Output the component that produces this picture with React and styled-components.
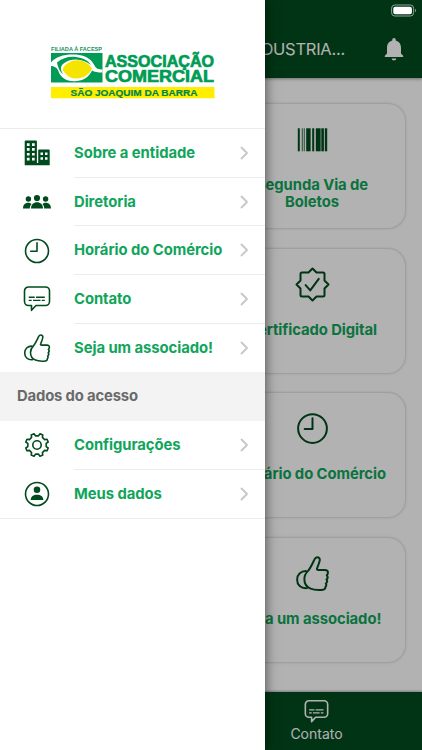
import React from 'react';
import styled, { createGlobalStyle } from 'styled-components';

const GlobalStyle = createGlobalStyle`
  * {
    box-sizing: border-box;
  }

  body {
    margin: 0;
    font-family: Inter, 'Liberation Sans', sans-serif;
    overflow: hidden;
  }
`;

const colors = {
  brand: '#004b1e',
  accent: '#10a55a',
  line: '#ececec',
};

const Screen = styled.div`
  position: relative;
  display: flex;
  flex-direction: column;
  width: 422px;
  height: 750px;
  overflow: hidden;
  background: #fff;
`;

const Header = styled.header`
  display: flex;
  align-items: flex-end;
  justify-content: flex-end;
  gap: 39px;
  height: 78px;
  padding: 0 18px 17px 0;
  color: #fff;
  background: ${colors.brand};
  box-shadow: 0 1px 3px rgba(0, 0, 0, 0.4);
`;

const Title = styled.h1`
  margin: 0;
  font-size: 16.5px;
  font-weight: 400;
  line-height: 24px;
  letter-spacing: -0.25px;
`;

const Cards = styled.main`
  display: grid;
  grid-template-columns: 185px;
  grid-auto-rows: 124px;
  gap: 20.7px;
  flex: 1;
  justify-content: end;
  padding: 26px 17.5px 0 0;
`;

const Card = styled.section`
  display: flex;
  flex-direction: column;
  align-items: center;
  gap: 20px;
  padding-top: 18px;
  border-radius: 17px;
  box-shadow: 0 0 3px rgba(0, 0, 0, 0.3);
`;

const CardTitle = styled.h2`
  width: ${(props) => (props.$narrow ? '130px' : 'auto')};
  margin: 0;
  color: ${colors.accent};
  font-size: 14.8px;
  font-weight: 700;
  line-height: 16.5px;
  letter-spacing: -0.06px;
  text-align: center;
  white-space: ${(props) => (props.$narrow ? 'normal' : 'nowrap')};
`;

const TabBar = styled.nav`
  display: flex;
  justify-content: flex-end;
  height: 58px;
  background: ${colors.brand};
  box-shadow: 0 -1px 2px rgba(0, 0, 0, 0.3);
`;

const Tab = styled.a`
  display: flex;
  flex-direction: column;
  align-items: center;
  width: 211px;
  padding-top: 7px;
  color: #fff;
  font-size: 14px;
  line-height: 20px;
`;

// Dims the page while the menu is open
const Backdrop = styled.div`
  position: absolute;
  inset: 0;
  background: rgba(0, 0, 0, 0.3);
`;

const Battery = styled.svg`
  position: absolute;
  top: 4px;
  right: 5px;
`;

const Drawer = styled.aside`
  position: absolute;
  top: 0;
  left: 0;
  bottom: 0;
  width: 265px;
  background: #fff;
  box-shadow: 0 0 12px rgba(0, 0, 0, 0.6);
`;

const LogoArea = styled.div`
  height: 129px;
  padding: 45px 0 0 50px;
  border-bottom: 1px solid ${colors.line};
`;

const LogoSvg = styled.svg`
  display: block;
  overflow: visible;
  font-family: 'Liberation Sans', sans-serif;
  font-weight: 700;
`;

const Row = styled.a`
  display: flex;
  align-items: center;
  gap: 23px;
  height: 48.7px;
  padding-left: 23px;
  border-bottom: ${(props) => (props.$last ? `1px solid ${colors.line}` : 'none')};
`;

const RowBody = styled.span`
  display: flex;
  flex: 1;
  align-items: center;
  justify-content: space-between;
  height: 100%;
  padding-right: 16px;
  border-bottom: ${(props) => (props.$line ? `1px solid ${colors.line}` : 'none')};
  color: ${colors.accent};
  font-size: 14.8px;
  font-weight: 700;
  letter-spacing: -0.04px;
  white-space: nowrap;
`;

const SectionTitle = styled.h3`
  height: 48.7px;
  margin: 0;
  padding-left: 17px;
  color: #6a6a6a;
  background: #f3f3f3;
  font-size: 14.8px;
  font-weight: 700;
  line-height: 48px;
  letter-spacing: -0.15px;
`;

const Glyph = styled.svg`
  flex: none;
  display: block;
  fill: none;
  stroke: currentColor;
  stroke-width: ${(props) => props.$weight || 1.6};
  stroke-linecap: round;
  stroke-linejoin: round;
  color: ${(props) => props.$color || colors.brand};
`;

function gearPath() {
  const points = [];
  for (let i = 0; i < 8; i += 1) {
    const mid = 22.5 + i * 45;
    [
      [-13, 9.3],
      [-7.5, 11.6],
      [7.5, 11.6],
      [13, 9.3],
    ].forEach(([offset, r]) => {
      const a = ((mid + offset) * Math.PI) / 180;
      points.push(
        `${(14 + r * Math.sin(a)).toFixed(2)} ${(14 - r * Math.cos(a)).toFixed(2)}`
      );
    });
  }
  return `M${points.join('L')}Z`;
}

const bars = [
  [0, 2],
  [4, 0.8],
  [6, 0.8],
  [8.4, 4.4],
  [14.4, 2],
  [18, 4.8],
  [23.5, 2.6],
  [27, 2.4],
];

const icons = {
  building: (
    <path
      fill="currentColor"
      stroke="none"
      fillRule="evenodd"
      d="M2.600 1.400H13a.9.9 0 0 1 .9.9V24h1.300V11.400a.9.9 0 0 1 .9-.9h9.700a.9.9 0 0 1 .9.9v14.900h-25V2.300a.9.9 0 0 1 .9-.9ZM3.900 4.300v2.700h2.700v-2.700ZM9 4.300v2.700h2.700v-2.700ZM3.900 9.100v2.700h2.700v-2.700ZM9 9.100v2.700h2.700v-2.700ZM3.900 13.900v2.700h2.700v-2.700ZM9 13.900v2.700h2.700v-2.700ZM3.900 18.700v2.700h2.700v-2.700ZM9 18.700v2.700h2.700v-2.700ZM17.500 13.500v2.500h2.500v-2.500ZM22 13.500v2.500h2.500v-2.500ZM17.500 18.300v2.500h2.500v-2.500ZM22 18.300v2.500h2.500v-2.500Z"
    />
  ),
  people: (
    <g fill="currentColor" stroke="none">
      <circle cx="14" cy="10" r="3.1" />
      <circle cx="5.4" cy="11" r="2.7" />
      <circle cx="22.6" cy="11" r="2.7" />
      <path d="M8 20.500c0-4 2.600-6.200 6-6.200s6 2.200 6 6.200Z" />
      <path d="M0 20.500c0-3.600 2.200-5.700 5.300-5.700 1.300 0 2.400.4 3.200 1.100-1.100 1.100-1.700 2.700-1.700 4.600ZM28 20.500c0-3.600-2.200-5.700-5.300-5.700-1.300 0-2.400.4-3.200 1.100 1.100 1.100 1.700 2.700 1.700 4.600Z" />
    </g>
  ),
  clock: (
    <>
      <circle cx="14" cy="14" r="11.5" />
      <path d="M14 5.700v8.600H7.700" />
    </>
  ),
  chat: (
    <>
      <path d="M5.500 2h17a4 4 0 0 1 4 4v10.500a4 4 0 0 1-4 4H13l-4.500 4.800v-4.800h-3a4 4 0 0 1-4-4V6a4 4 0 0 1 4-4Z" />
      <path
        strokeWidth="1.4"
        strokeLinecap="butt"
        d="M5.700 12.300h6M13 12.300h8.800M5.700 15.400h3M10 15.400h7.500M18.800 15.400h3"
      />
    </>
  ),
  thumb: (
    <>
      <path d="M10.300 12.100C12.500 9.500 14 6 15.600 2.700c.5-1.100 1.200-1.700 2.200-1.700 1.400 0 2.200 1.100 2 2.500-.3 2-1.200 4-2.100 6.200-.4.900 0 1.400.9 1.400h5.300c1.700 0 2.600 1 2.400 2.500-.1.900-.4 1.400-.9 1.900.8.900.8 2.400-.2 3.300.7 1 .5 2.400-.5 3.200.5 1 .3 2.100-.4 2.800.1 1.200-.6 2.100-1.900 2.200-3.800.4-7.300.2-10-.9-3.200-1.300-4.900-4-4.900-7.500 0-2.600 1-4.800 2.800-6.500Z" />
      <path d="M9 12.100C4.400 12 1.700 15 1.700 18.900c0 4 2.800 7.300 7.900 6.800" />
    </>
  ),
  gear: (
    <>
      <path d={gearPath()} />
      <circle cx="14" cy="14" r="4.2" />
    </>
  ),
  profile: (
    <>
      <circle cx="14" cy="14" r="11.5" />
      <circle cx="14" cy="9.8" r="3.3" fill="currentColor" stroke="none" />
      <path
        fill="currentColor"
        stroke="none"
        d="M7.700 20c0-3.500 2.700-5.300 6.300-5.300s6.300 1.800 6.300 5.300Z"
      />
    </>
  ),
  seal: (
    <>
      <path d="M14 1.200 17.200 4.400H22.400a1.200 1.200 0 0 1 1.200 1.200V10.800L26.800 14 23.600 17.200V22.400a1.200 1.200 0 0 1-1.200 1.200H17.200L14 26.800 10.800 23.600H5.600a1.200 1.200 0 0 1-1.200-1.200V17.200L1.200 14 4.400 10.800V5.600a1.200 1.200 0 0 1 1.200-1.200H10.800Z" />
      <path d="m8.500 14.500 3.700 4.200 6.800-9.200" />
    </>
  ),
};

function Icon({ name, size = 28, color, weight }) {
  return (
    <Glyph
      width={size}
      height={size}
      viewBox="0 0 28 28"
      $color={color}
      $weight={weight}
    >
      {icons[name]}
    </Glyph>
  );
}

function Barcode() {
  return (
    <Glyph width="35" height="35" viewBox="0 0 35 35">
      {bars.map(([x, width]) => (
        <rect
          key={x}
          x={x + 2.8}
          y="6.3"
          width={width}
          height="23"
          fill="currentColor"
          stroke="none"
        />
      ))}
    </Glyph>
  );
}

function Bell() {
  return (
    <svg width="20" height="24" viewBox="0 0 20 24" fill="#fff">
      <path d="M10 23.500c1.300 0 2.300-.9 2.300-2H7.700c0 1.100 1 2 2.300 2ZM17 16.500V10.800c0-3.500-2-6.400-5.300-7.200v-.8C11.700 1.800 11 1 10 1s-1.700.8-1.700 1.800v.8C5 4.400 3 7.300 3 10.800v5.700L.8 18.800V20h18.400v-1.200Z" />
    </svg>
  );
}

function Logo() {
  return (
    <LogoSvg width="166" height="55" viewBox="0 0 166 55">
      <text x="1" y="6.3" fontSize="5" fill="#16935a" textLength="51" lengthAdjust="spacingAndGlyphs">
        FILIADA À FACESP
      </text>
      <path fill="#009b54" d="M1 8h51.500v29.500H1Z" />
      <path
        fill="#fff"
        d="M1 17.500C6 11 16 8.800 26 9.600c10 .8 16 5.400 18.500 10.900 1.500 3 4 4 8 4v3c-5 0-8-.6-10.500-2-3 7-9.500 10.700-18 10.700-8.500 0-14-4.200-16-11.200-2-3-4-4-7-4Z"
      />
      <path
        fill="#009b54"
        d="M7 17.500c5-4.500 12-6.300 19-5.500 7 .8 12.500 3.800 15 8-7.500-6.500-20-8-28-1-3 2.600-2.600 7 .5 10.500C9.500 27 8 22 7 17.500Z"
      />
      <path
        fill="#f5e400"
        d="M12.500 24.500c3-6.500 9.500-10 17.500-9 5.500.7 9 3.500 12 8.300-3 6-9 10.200-17 9.700-6-.5-10-4.300-12.500-9Z"
      />
      <g fill="#009b54" stroke="#009b54" strokeWidth="0.7" fontSize="17.3">
        <text x="55" y="21.500" textLength="109" lengthAdjust="spacingAndGlyphs">
          ASSOCIAÇÃO
        </text>
        <text x="55" y="37.3" textLength="109" lengthAdjust="spacingAndGlyphs">
          COMERCIAL
        </text>
      </g>
      <path fill="#ffee00" d="M1 42h163.500v11.200H1Z" />
      <text
        x="20.5"
        y="51"
        fontSize="9.3"
        fill="#00854a"
        stroke="#00854a"
        strokeWidth="0.2"
        textLength="127"
        lengthAdjust="spacingAndGlyphs"
      >
        SÃO JOAQUIM DA BARRA
      </text>
    </LogoSvg>
  );
}

function MenuRow({ icon, label, line, last }) {
  return (
    <Row $last={last}>
      <Icon name={icon} />
      <RowBody $line={line}>
        {label}
        <Glyph width="9" height="14" viewBox="0 0 9 14" $color="#c7c7c7" $weight={1.8}>
          <path d="M1.500 1.500 7 7l-5.500 5.500" />
        </Glyph>
      </RowBody>
    </Row>
  );
}

export default function App() {
  return (
    <Screen>
      <GlobalStyle />
      <Header>
        <Title>INDUSTRIA...</Title>
        <Bell />
      </Header>
      <Cards>
        <Card>
          <Barcode />
          <CardTitle $narrow>Segunda Via de Boletos</CardTitle>
        </Card>
        <Card>
          <Icon name="seal" size={35} />
          <CardTitle>Certificado Digital</CardTitle>
        </Card>
        <Card>
          <Icon name="clock" size={35} />
          <CardTitle>Horário do Comércio</CardTitle>
        </Card>
        <Card>
          <Icon name="thumb" size={35} />
          <CardTitle>Seja um associado!</CardTitle>
        </Card>
      </Cards>
      <TabBar>
        <Tab>
          <Icon name="chat" size={25} color="#fff" weight={1.8} />
          Contato
        </Tab>
      </TabBar>

      <Backdrop />
      <Battery width="26" height="13" viewBox="0 0 26 13">
        <rect x="0.6" y="1" width="22" height="11" rx="3.2" fill="none" stroke="#8fa698" />
        <rect x="2.3" y="2.7" width="18.6" height="7.6" rx="1.8" fill="#fff" />
        <path d="M24 4.800c1.300.5 1.300 2.900 0 3.400Z" fill="#8fa698" />
      </Battery>

      <Drawer>
        <LogoArea>
          <Logo />
        </LogoArea>
        <MenuRow icon="building" label="Sobre a entidade" line />
        <MenuRow icon="people" label="Diretoria" line />
        <MenuRow icon="clock" label="Horário do Comércio" line />
        <MenuRow icon="chat" label="Contato" line />
        <MenuRow icon="thumb" label="Seja um associado!" />
        <SectionTitle>Dados do acesso</SectionTitle>
        <MenuRow icon="gear" label="Configurações" line />
        <MenuRow icon="profile" label="Meus dados" last />
      </Drawer>
    </Screen>
  );
}
